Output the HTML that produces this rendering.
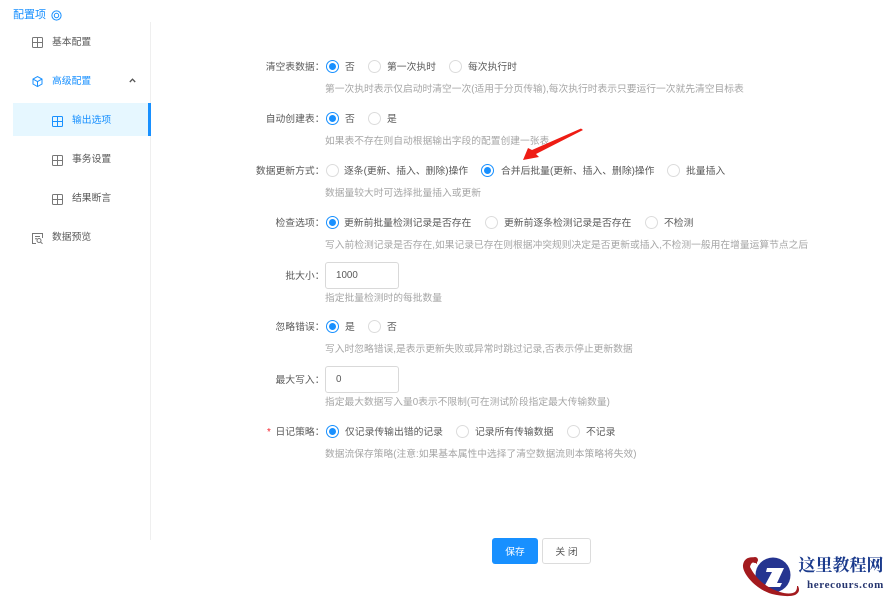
<!DOCTYPE html>
<html lang="zh">
<head>
<meta charset="utf-8">
<title>配置项</title>
<style>
html,body{margin:0;padding:0;background:#fff;}
body{width:889px;height:597px;position:relative;overflow:hidden;font-family:"Liberation Sans","Noto Sans CJK SC",sans-serif;font-size:9.8px;color:#595959;}
#p{position:absolute;left:0;top:0;width:889px;height:597px;filter:blur(.25px);}
.t{position:absolute;white-space:nowrap;line-height:14px;height:14px;}
.l{position:absolute;right:564.500px;white-space:nowrap;line-height:14px;height:14px;color:#595959;}
.h{position:absolute;left:325px;white-space:nowrap;line-height:14px;height:14px;color:#a6a6a6;font-size:9.750px;}
.r{position:absolute;width:11px;height:11px;border:1px solid #dcdcdc;border-radius:50%;background:#fff;}
.r.on{border-color:#1890ff;}
.r.on:after{content:"";position:absolute;left:2px;top:2px;width:7px;height:7px;border-radius:50%;background:#1890ff;}
.in{position:absolute;left:325px;width:72px;height:25px;border:1px solid #d9d9d9;border-radius:3px;background:#fff;}
.in span{position:absolute;left:10px;top:5px;line-height:14px;color:#595959;}
svg.i{position:absolute;overflow:visible;}
</style>
</head>
<body>
<div id="p">
<!-- sidebar -->
<div class="t" style="left:13px;top:8px;color:#1890ff;font-size:11px;">配置项</div>
<svg class="i" style="left:51px;top:10px" width="11" height="11" viewBox="0 0 11 11" fill="none" stroke="#1890ff"><circle cx="5.500" cy="5.500" r="4.600"/><circle cx="5.500" cy="5.500" r="2.200"/></svg>
<div style="position:absolute;left:150px;top:22px;width:1px;height:518px;background:#efefef"></div>
<div style="position:absolute;left:13px;top:103px;width:135px;height:33px;background:#e6f7ff"></div>
<div style="position:absolute;left:148px;top:103px;width:3px;height:33px;background:#1890ff"></div>

<svg class="i" style="left:32px;top:37px" width="11" height="11" viewBox="0 0 11 11" fill="none" stroke="#777"><rect x=".5" y=".5" width="10" height="10" rx="1"/><path d="M5.500 .5V10.500M.5 5.500H10.500"/></svg>
<div class="t" style="left:52px;top:36px">基本配置</div>

<svg class="i" style="left:32px;top:76px" width="11" height="11" viewBox="0 0 11 11" fill="none" stroke="#1890ff"><path d="M5.500 .6L10 3.100V8L5.500 10.500L1 8V3.100Z"/><path d="M1 3.100L5.500 5.600L10 3.100M5.500 5.600V10.500"/></svg>
<div class="t" style="left:52px;top:75px;color:#1890ff">高级配置</div>
<svg class="i" style="left:129px;top:78px" width="7" height="5" viewBox="0 0 7 5" fill="none" stroke="#555" stroke-width="1.300"><path d="M.8 4L3.500 1.200L6.200 4"/></svg>

<svg class="i" style="left:52px;top:116px" width="11" height="11" viewBox="0 0 11 11" fill="none" stroke="#1890ff"><rect x=".5" y=".5" width="10" height="10" rx="1"/><path d="M5.500 .5V10.500M.5 5.500H10.500"/></svg>
<div class="t" style="left:72px;top:114px;color:#1890ff">输出选项</div>

<svg class="i" style="left:52px;top:155px" width="11" height="11" viewBox="0 0 11 11" fill="none" stroke="#777"><rect x=".5" y=".5" width="10" height="10" rx="1"/><path d="M5.500 .5V10.500M.5 5.500H10.500"/></svg>
<div class="t" style="left:72px;top:153px">事务设置</div>

<svg class="i" style="left:52px;top:194px" width="11" height="11" viewBox="0 0 11 11" fill="none" stroke="#777"><rect x=".5" y=".5" width="10" height="10" rx="1"/><path d="M5.500 .5V10.500M.5 5.500H10.500"/></svg>
<div class="t" style="left:72px;top:192px">结果断言</div>

<svg class="i" style="left:32px;top:233px" width="11" height="11" viewBox="0 0 11 11" fill="none" stroke="#777"><path d="M4 10.500H.5V.5H10.500V5"/><path d="M3 3.500H8M3 5.800H5"/><circle cx="7" cy="7.500" r="2"/><path d="M8.500 9L10.500 10.800"/></svg>
<div class="t" style="left:52px;top:231px">数据预览</div>

<!-- row 1 -->
<div class="l" style="top:61px">清空表数据：</div>
<div class="r on" style="left:325.500px;top:60px"></div><div class="t" style="left:345px;top:61px">否</div>
<div class="r" style="left:368px;top:60px"></div><div class="t" style="left:387px;top:61px">第一次执时</div>
<div class="r" style="left:449px;top:60px"></div><div class="t" style="left:468px;top:61px">每次执行时</div>
<div class="h" style="top:83px">第一次执时表示仅启动时清空一次(适用于分页传输),每次执行时表示只要运行一次就先清空目标表</div>

<!-- row 2 -->
<div class="l" style="top:113px">自动创建表：</div>
<div class="r on" style="left:325.500px;top:112px"></div><div class="t" style="left:345px;top:113px">否</div>
<div class="r" style="left:368px;top:112px"></div><div class="t" style="left:387px;top:113px">是</div>
<div class="h" style="top:135px">如果表不存在则自动根据输出字段的配置创建一张表</div>

<!-- row 3 -->
<div class="l" style="top:165px">数据更新方式：</div>
<div class="r" style="left:325.500px;top:164px"></div><div class="t" style="left:344px;top:165px">逐条(更新、插入、删除)操作</div>
<div class="r on" style="left:481px;top:164px"></div><div class="t" style="left:501px;top:165px">合并后批量(更新、插入、删除)操作</div>
<div class="r" style="left:667px;top:164px"></div><div class="t" style="left:686px;top:165px">批量插入</div>
<div class="h" style="top:187px">数据量较大时可选择批量插入或更新</div>

<!-- row 4 -->
<div class="l" style="top:217px">检查选项：</div>
<div class="r on" style="left:325.500px;top:216px"></div><div class="t" style="left:344px;top:217px">更新前批量检测记录是否存在</div>
<div class="r" style="left:485px;top:216px"></div><div class="t" style="left:504px;top:217px">更新前逐条检测记录是否存在</div>
<div class="r" style="left:645px;top:216px"></div><div class="t" style="left:664px;top:217px">不检测</div>
<div class="h" style="top:239px">写入前检测记录是否存在,如果记录已存在则根据冲突规则决定是否更新或插入,不检测一般用在增量运算节点之后</div>

<!-- batch -->
<div class="l" style="top:270px">批大小：</div>
<div class="in" style="top:262px"><span style="top:6px">1000</span></div>
<div class="h" style="top:292px">指定批量检测时的每批数量</div>

<!-- ignore -->
<div class="l" style="top:321px">忽略错误：</div>
<div class="r on" style="left:325.500px;top:320px"></div><div class="t" style="left:345px;top:321px">是</div>
<div class="r" style="left:368px;top:320px"></div><div class="t" style="left:387px;top:321px">否</div>
<div class="h" style="top:343px">写入时忽略错误,是表示更新失败或异常时跳过记录,否表示停止更新数据</div>

<!-- max -->
<div class="l" style="top:374px">最大写入：</div>
<div class="in" style="top:366px"><span style="top:6px">0</span></div>
<div class="h" style="top:396px">指定最大数据写入量0表示不限制(可在测试阶段指定最大传输数量)</div>

<!-- log -->
<div class="t" style="left:267px;top:426px;color:#f5222d">*</div>
<div class="l" style="top:426px">日记策略：</div>
<div class="r on" style="left:325.500px;top:425px"></div><div class="t" style="left:345px;top:426px">仅记录传输出错的记录</div>
<div class="r" style="left:456px;top:425px"></div><div class="t" style="left:475px;top:426px">记录所有传输数据</div>
<div class="r" style="left:567px;top:425px"></div><div class="t" style="left:586px;top:426px">不记录</div>
<div class="h" style="top:448px">数据流保存策略(注意:如果基本属性中选择了清空数据流则本策略将失效)</div>

<!-- buttons -->
<div style="position:absolute;left:492px;top:538px;width:46px;height:26px;background:#1890ff;border-radius:3px;color:#fff;text-align:center;line-height:29px;">保存</div>
<div style="position:absolute;left:542px;top:538px;width:47px;height:24px;border:1px solid #dcdcdc;border-radius:3px;color:#595959;text-align:center;line-height:27px;">关 闭</div>

<!-- red arrow -->
<svg class="i" style="left:0;top:0" width="889" height="597" viewBox="0 0 889 597"><polygon points="581,128.500 532,150 528,148 523,160 539,157 536,154 583,130" fill="#ee1c14"/></svg>

<!-- logo -->
<svg class="i" style="left:0;top:0" width="889" height="597" viewBox="0 0 889 597">
<circle cx="773" cy="575" r="17.500" fill="#253490"/>
<polygon points="767,568 784,568 777,583 782,583 780,587 764,587 772,572 766,572" fill="#fff"/>
<path d="M743 565C744 558 750 556 757 558L757 564C754 561 751 562 750 567C754 575 763 587 780 592C786 594 792 594 795 592C797 590 797 588 797 586L798 586C800 590 799 593 795 595C789 597 781 596 772 594C757 590 742 574 743 565Z" fill="#a31a1e"/>
<circle cx="755" cy="560" r="3" fill="#a31a1e"/>
</svg>
<div class="t" style="left:798.500px;top:556px;height:20px;line-height:20px;font-family:'Liberation Serif','Noto Serif CJK SC',serif;font-weight:700;font-size:17px;color:#1a3a8c;">这里教程网</div>
<div class="t" style="left:807px;top:578px;font-family:'Liberation Serif',serif;font-weight:700;font-size:11px;color:#26356f;letter-spacing:.65px;">herecours.com</div>
</div>
</body>
</html>
